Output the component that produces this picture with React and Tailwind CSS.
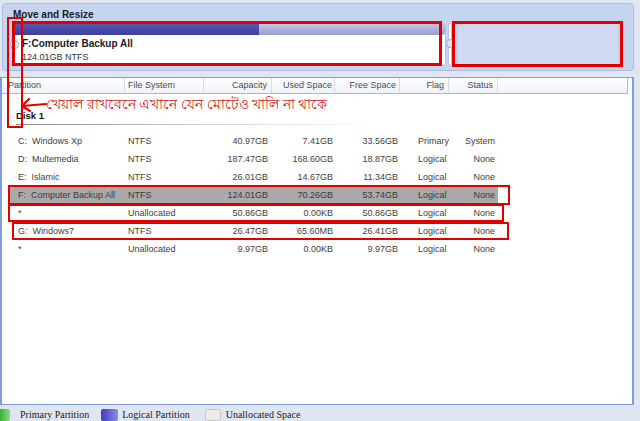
import React from "react";

const rows = [
  ["C:  Windows Xp", "NTFS", "40.97GB", "7.41GB", "33.56GB", "Primary", "System"],
  ["D:  Multemedia", "NTFS", "187.47GB", "168.60GB", "18.87GB", "Logical", "None"],
  ["E:  Islamic", "NTFS", "26.01GB", "14.67GB", "11.34GB", "Logical", "None"],
  ["F:  Computer Backup All", "NTFS", "124.01GB", "70.26GB", "53.74GB", "Logical", "None", true],
  ["*", "Unallocated", "50.86GB", "0.00KB", "50.86GB", "Logical", "None"],
  ["G:  Windows7", "NTFS", "26.47GB", "65.60MB", "26.41GB", "Logical", "None"],
  ["*", "Unallocated", "9.97GB", "0.00KB", "9.97GB", "Logical", "None"],
];

function Cells({ r }) {
  return (
    <>
      <div className="w-[117px] shrink-0 pl-[10px] whitespace-pre">{r[0]}</div>
      <div className="w-[79px] shrink-0 pl-[3px]">{r[1]}</div>
      <div className="w-[68px] shrink-0 pr-[4px] text-right">{r[2]}</div>
      <div className="w-[63px] shrink-0 pr-[2px] text-right">{r[3]}</div>
      <div className="w-[65px] shrink-0 pr-[2px] text-right">{r[4]}</div>
      <div className="w-[49px] shrink-0 pl-[18px]">{r[5]}</div>
      <div className="w-[49px] shrink-0 pr-[3px] text-right">{r[6]}</div>
    </>
  );
}

export default function App() {
  return (
    <div className="relative h-[421px] w-[640px] overflow-hidden bg-[#dfe6f2] text-[9px] text-[#404040] [font-family:'Liberation_Sans',Arial,sans-serif]">
      {/* move and resize panel */}
      <div className="ml-[2px] mt-[3px] h-[68px] w-[632px] rounded-[4px] border border-[#a9bde0] bg-[#c5d5f1] px-[11px] pt-[4px]">
        <div className="-ml-[1px] text-[10px] font-bold leading-[14px] text-[#1b1b1b]">Move and Resize</div>
        <div className="mt-[1px] flex items-stretch">
          <div className="relative h-[43px] w-[432px] rounded-[3px] border border-[#b9c2dc] bg-white">
            <div className="flex h-[11px]">
              <div className="w-[244px] bg-[linear-gradient(#5558b4,#3d3f99)]"></div>
              <div className="flex-1 rounded-r-[3px] bg-[linear-gradient(#c3c5ea,#9a9ed3)]"></div>
            </div>
            <span className="absolute -left-[5px] top-[16px] h-[9px] w-[9px] rounded-full border border-[#9aa4c4] bg-white"></span>
            <div className="pl-[7px] pt-[2px] text-[10px] font-bold leading-[14px] text-[#1b1b1b]">F:Computer Backup All</div>
            <div className="pl-[7px] text-[9px] leading-[13px] text-[#333]">124.01GB NTFS</div>
          </div>
          <div className="relative w-[8px]">
            <div className="mx-auto h-full w-[4px] rounded-[2px] border border-[#b9c2dc] bg-white"></div>
            <div className="absolute left-[0px] top-[16px] h-[9px] w-[9px] rounded-full border border-[#9aa4c4] bg-[#dfe4f2]"></div>
          </div>
          <div className="ml-[3px] h-[43px] w-[162px] border border-[#c3cdea] bg-[#d0d9f2]"></div>
        </div>
      </div>

      {/* partition list */}
      <div className="mt-[6px] h-[328px] w-[634px] border-y border-l-2 border-r-2 border-[#7f9dd6] bg-white">
        <div className="flex h-[16px] w-[626px] items-center border-b border-r border-[#a7b9dc] bg-[linear-gradient(#ffffff,#eef2f9)] text-[#4a4a4a]">
          <div className="h-full w-[123px] shrink-0 border-r border-[#d3dbec] pl-[6px] leading-[15px]">Partition</div>
          <div className="h-full w-[79px] shrink-0 border-r border-[#d3dbec] pl-[3px] leading-[15px]">File System</div>
          <div className="h-full w-[68px] shrink-0 border-r border-[#d3dbec] pr-[4px] text-right leading-[15px]">Capacity</div>
          <div className="h-full w-[63px] shrink-0 border-r border-[#d3dbec] pr-[2px] text-right leading-[15px]">Used Space</div>
          <div className="h-full w-[65px] shrink-0 border-r border-[#d3dbec] pr-[3px] text-right leading-[15px]">Free Space</div>
          <div className="h-full w-[49px] shrink-0 border-r border-[#d3dbec] pr-[4px] text-right leading-[15px]">Flag</div>
          <div className="h-full w-[49px] shrink-0 border-r border-[#d3dbec] pr-[4px] text-right leading-[15px]">Status</div>
        </div>
        <div className="ml-[14px] mt-[16px] text-[9.5px] font-bold leading-[12px] text-[#111]">Disk 1</div>
        <div className="ml-[14px] mt-[2px] h-[1px] w-[360px] bg-[linear-gradient(90deg,#8a8a8a,#d8d8d8_60%,#ffffff)]"></div>
        <div className="mt-[8px] ml-[6px]">
          {rows.map((r, i) => (
            <div key={i} className={`flex h-[18px] w-[490px] items-center ${r[7] ? "bg-[#a9a9a9] text-[#3a3a3a]" : ""}`}>
              <Cells r={r} />
            </div>
          ))}
        </div>
      </div>

      {/* legend */}
      <div className="flex h-[16px] items-end font-['Liberation_Serif',serif] text-[10px] leading-[13px] text-[#222]">
        <span className="h-[12px] w-[10px] rounded-r-[2px] bg-[linear-gradient(90deg,#35b035,#8ddc7f)]"></span>
        <span className="ml-[10px]">Primary Partition</span>
        <span className="ml-[12px] h-[12px] w-[17px] rounded-[2px] bg-[linear-gradient(90deg,#3c3cc0,#8c8ce4)]"></span>
        <span className="ml-[4px]">Logical Partition</span>
        <span className="ml-[15px] h-[12px] w-[16px] rounded-[2px] border border-[#c8c8c8] bg-[#eeeae6]"></span>
        <span className="ml-[5px]">Unallocated Space</span>
      </div>

      {/* annotations */}
      <div className="pointer-events-none absolute left-[12px] top-[21px] h-[45px] w-[430px] border-[3px] border-[#e00000]"></div>
      <div className="pointer-events-none absolute left-[452px] top-[21px] h-[46px] w-[171px] border-[3px] border-[#e00000]"></div>
      <div className="pointer-events-none absolute left-[7px] top-[17px] h-[111px] w-[16px] border-[2px] border-[#e00000]"></div>
      <div className="pointer-events-none absolute left-[8px] top-[185px] h-[20px] w-[502px] border-[2px] border-[#e00000]"></div>
      <div className="pointer-events-none absolute left-[8px] top-[204px] h-[18px] w-[496px] border-[2px] border-[#e00000]"></div>
      <div className="pointer-events-none absolute left-[12px] top-[222px] h-[18px] w-[497px] border-[2px] border-[#e00000]"></div>
      <svg className="pointer-events-none absolute left-[18px] top-[96px]" width="30" height="16" viewBox="0 0 30 16">
        <path d="M28 8 L4 10 M4 10 L11 3 M4 10 L12 15" stroke="#e00000" strokeWidth="2.2" fill="none" strokeLinecap="round" />
      </svg>
      <div className="pointer-events-none absolute left-[46px] top-[95px] text-[14px] leading-[18px] text-[#d81a1a] [font-family:'Noto_Sans',sans-serif]">
        খেয়াল রাখবেনে এখানে যেন মোটেও খালি না থাকে
      </div>
    </div>
  );
}
